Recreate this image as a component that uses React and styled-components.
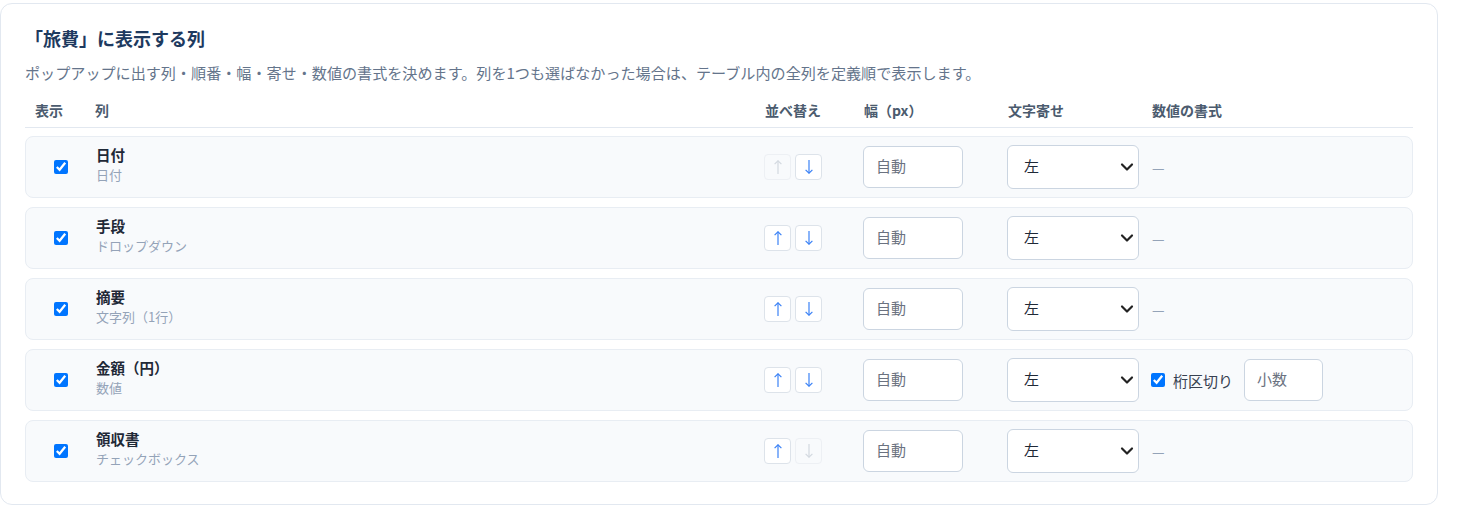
import React from 'react';
import styled, { createGlobalStyle } from 'styled-components';
import { ChevronDown } from 'lucide-react';

const GlobalStyle = createGlobalStyle`
  html, body {
    margin: 0;
    padding: 0;
    background: #ffffff;
  }
  body {
    font-family: "Noto Sans CJK JP", "Noto Sans", sans-serif;
    color: #1f2937;
  }
`;

const Card = styled.section`
  box-sizing: border-box;
  width: 1438px;
  margin: 3px 0 0 0;
  padding: 22px 24px 22px 24px;
  background: #fff;
  border: 1px solid #e2e8f0;
  border-radius: 12px;
`;

const Title = styled.h3`
  margin: 0;
  font-size: 18px;
  font-weight: 700;
  line-height: 24px;
  color: #1e3a5f;
`;

const Description = styled.p`
  margin: 11px 0 0 0;
  font-size: 15.1px;
  line-height: 22px;
  color: #64748b;
`;

const GRID = '70px 1fr 99px 144px 144px 261px';

const HeaderRow = styled.div`
  display: grid;
  grid-template-columns: ${GRID};
  align-items: center;
  margin-top: 11px;
  height: 33px;
  border-bottom: 1px solid #e2e8f0;
`;

const HeaderCell = styled.div`
  font-size: 14px;
  font-weight: 700;
  color: #4b5b6e;
  padding-left: ${p => (p.$first ? '10px' : '0')};
  padding-bottom: 2px;
`;

const Rows = styled.div`
  display: flex;
  flex-direction: column;
  gap: 9px;
  margin-top: 8px;
`;

const Row = styled.div`
  display: grid;
  grid-template-columns: ${GRID};
  align-items: center;
  box-sizing: border-box;
  height: 62px;
  background: #f8fafc;
  border: 1px solid #e8edf3;
  border-radius: 8px;
`;

const CheckCell = styled.div`
  display: flex;
  justify-content: center;
`;

const Check = styled.input.attrs({ type: 'checkbox' })`
  width: 14px;
  height: 14px;
  margin: 0;
  accent-color: #0075ff;
`;

const NameCell = styled.div`
  display: flex;
  flex-direction: column;
  gap: 2px;
  margin-bottom: 5px;
`;

const Name = styled.div`
  font-size: 14.5px;
  font-weight: 700;
  line-height: 19px;
  color: #1f2937;
`;

const Sub = styled.div`
  font-size: 13px;
  line-height: 18px;
  color: #94a3b8;
`;

const OrderCell = styled.div`
  display: flex;
  gap: 4px;
`;

const ArrowButton = styled.button`
  box-sizing: border-box;
  display: flex;
  align-items: center;
  justify-content: center;
  width: 27px;
  height: 26px;
  padding: 0;
  border: 1px solid ${p => (p.disabled ? '#edf0f4' : '#dde3ea')};
  border-radius: 4px;
  background: ${p => (p.disabled ? '#f8fafc' : '#ffffff')};
  color: ${p => (p.disabled ? '#d3d9e0' : '#3b82f6')};
  cursor: ${p => (p.disabled ? 'default' : 'pointer')};
`;

const TextInput = styled.input`
  box-sizing: border-box;
  width: ${p => p.$width || '100px'};
  height: 42px;
  padding: 0 12px 3px 12px;
  border: 1px solid #cbd5e1;
  border-radius: 6px;
  background: #fff;
  font-family: "Noto Sans CJK JP", sans-serif;
  font-size: 15px;
  color: #1f2937;
  &::placeholder {
    color: #6b7280;
  }
`;

const SelectWrap = styled.div`
  position: relative;
  width: 132px;
  height: 44px;
`;

const Select = styled.select`
  appearance: none;
  box-sizing: border-box;
  width: 100%;
  height: 100%;
  padding: 0 30px 3px 16px;
  border: 1px solid #cbd5e1;
  border-radius: 6px;
  background: #fff;
  font-family: "Noto Sans CJK JP", sans-serif;
  font-size: 15px;
  color: #1f2937;
`;

const Chevron = styled(ChevronDown)`
  position: absolute;
  right: 2px;
  top: 50%;
  transform: translateY(-50%);
  pointer-events: none;
  color: #222;
`;

const FormatCell = styled.div`
  display: flex;
  align-items: center;
  gap: 8px;
`;

const Dash = styled.span`
  font-size: 14px;
  color: #94a3b8;
  padding-left: 1px;
`;

const SmallLabel = styled.label`
  display: flex;
  align-items: center;
  gap: 8px;
  font-size: 15px;
  color: #374151;
  margin-right: 3px;
`;

function Arrow({ down }) {
  return (
    <svg width="10" height="16" viewBox="0 0 10 16" fill="none" stroke="currentColor" strokeWidth="1.2"
      style={down ? { transform: 'rotate(180deg)' } : undefined}>
      <path d="M5 15V1.8" />
      <path d="M1.6 5.2L5 1.8l3.4 3.4" />
    </svg>
  );
}

const columns = [
  { name: '日付', type: '日付' },
  { name: '手段', type: 'ドロップダウン' },
  { name: '摘要', type: '文字列（1行）' },
  { name: '金額（円）', type: '数値', numeric: true },
  { name: '領収書', type: 'チェックボックス' },
];

export default function App() {
  return (
    <>
      <GlobalStyle />
      <Card>
        <Title>「旅費」に表示する列</Title>
        <Description>
          ポップアップに出す列・順番・幅・寄せ・数値の書式を決めます。列を1つも選ばなかった場合は、テーブル内の全列を定義順で表示します。
        </Description>
        <HeaderRow>
          <HeaderCell $first>表示</HeaderCell>
          <HeaderCell>列</HeaderCell>
          <HeaderCell>並べ替え</HeaderCell>
          <HeaderCell>幅（px）</HeaderCell>
          <HeaderCell>文字寄せ</HeaderCell>
          <HeaderCell>数値の書式</HeaderCell>
        </HeaderRow>
        <Rows>
          {columns.map((col, i) => (
            <Row key={col.name}>
              <CheckCell>
                <Check defaultChecked />
              </CheckCell>
              <NameCell>
                <Name>{col.name}</Name>
                <Sub>{col.type}</Sub>
              </NameCell>
              <OrderCell>
                <ArrowButton disabled={i === 0} aria-label="上へ"><Arrow /></ArrowButton>
                <ArrowButton disabled={i === columns.length - 1} aria-label="下へ"><Arrow down /></ArrowButton>
              </OrderCell>
              <div>
                <TextInput placeholder="自動" />
              </div>
              <div>
                <SelectWrap>
                  <Select defaultValue="left">
                    <option value="left">左</option>
                    <option value="center">中央</option>
                    <option value="right">右</option>
                  </Select>
                  <Chevron size={20} strokeWidth={2.6} />
                </SelectWrap>
              </div>
              <FormatCell>
                {col.numeric ? (
                  <>
                    <SmallLabel>
                      <Check defaultChecked />
                      桁区切り
                    </SmallLabel>
                    <TextInput $width="79px" placeholder="小数" />
                  </>
                ) : (
                  <Dash>—</Dash>
                )}
              </FormatCell>
            </Row>
          ))}
        </Rows>
      </Card>
    </>
  );
}
